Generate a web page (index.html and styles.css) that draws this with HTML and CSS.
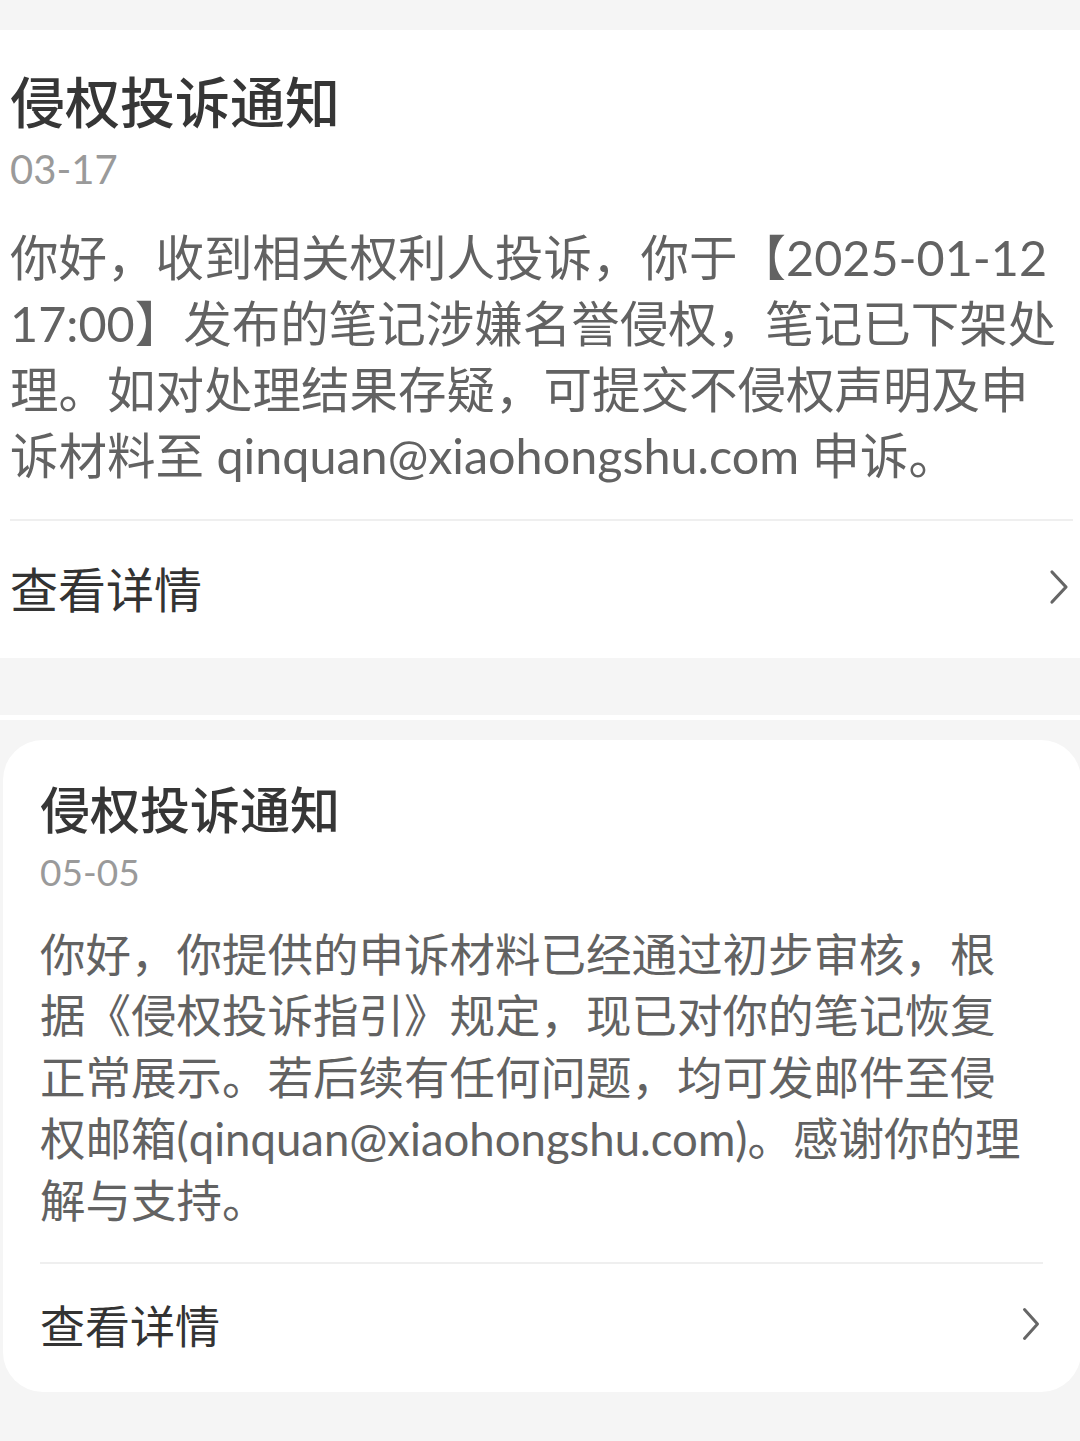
FILE: index.html
```html
<!DOCTYPE html>
<html lang="zh-CN">
<head>
<meta charset="utf-8">
<title>侵权投诉通知</title>
<link rel="stylesheet" href="styles.css">
</head>
<body>
<main class="page">
  <section class="card card-flat">
    <h2 class="title">侵权投诉通知</h2>
    <div class="date">03-17</div>
    <p class="text">你好，收到相关权利人投诉，你于【2025-01-12<br>17:00】发布的笔记涉嫌名誉侵权，笔记已下架处<br>理。如对处理结果存疑，可提交不侵权声明及申<br>诉材料至 qinquan@xiaohongshu.com 申诉。</p>
    <div class="divider"></div>
    <div class="footer">
      <span class="more">查看详情</span>
      <svg class="chev" width="22" height="38" viewBox="0 0 22 38"><path d="M4 4 L18 19 L4 34" fill="none" stroke="#666" stroke-width="3.2" stroke-linecap="round" stroke-linejoin="round"/></svg>
    </div>
  </section>

  <div class="sep"></div>

  <section class="card card-round">
    <h2 class="title">侵权投诉通知</h2>
    <div class="date">05-05</div>
    <p class="text">你好，你提供的申诉材料已经通过初步审核，根<br>据《侵权投诉指引》规定，现已对你的笔记恢复<br>正常展示。若后续有任何问题，均可发邮件至侵<br>权邮箱(qinquan@xiaohongshu.com)。感谢你的理<br>解与支持。</p>
    <div class="divider"></div>
    <div class="footer">
      <span class="more">查看详情</span>
      <svg class="chev" width="20" height="36" viewBox="0 0 20 36"><path d="M3.5 3.5 L16.5 18 L3.5 32.5" fill="none" stroke="#666" stroke-width="3" stroke-linecap="round" stroke-linejoin="round"/></svg>
    </div>
  </section>
</main>
</body>
</html>
```

FILE: styles.css
```css
html, body {
  margin: 0;
  padding: 0;
  overflow-x: hidden;
}
body {
  background: #f5f5f5;
  font-family: "Lato", "Noto Sans CJK SC", "Noto Sans", sans-serif;
  width: 1080px;
  height: 1441px;
}
.page {
  padding-top: 30px;
  display: flex;
  flex-direction: column;
}
.card {
  background: #fff;
  display: flex;
  flex-direction: column;
}
.title {
  margin: 0;
  font-family: "Noto Sans CJK SC", sans-serif;
  font-weight: 500;
  color: #363636;
}
.date {
  color: #9a9a9a;
}
.text {
  margin: 0;
  color: #626262;
  white-space: nowrap;
}
.divider {
  height: 2px;
  background: #efefef;
}
.footer {
  display: flex;
  align-items: center;
  justify-content: space-between;
}
.more {
  font-family: "Noto Sans CJK SC", sans-serif;
  color: #333;
}

/* first card: full width, square */
.card-flat {
  padding: 31px 7px 0 10px;
}
.card-flat .title {
  font-size: 55px;
  line-height: 76px;
}
.card-flat .date {
  font-size: 40px;
  line-height: 50px;
  margin-top: 7px;
}
.card-flat .text {
  font-size: 48.5px;
  line-height: 66px;
  margin-top: 30px;
}
.card-flat .divider {
  margin-top: 31px;
}
.card-flat .footer {
  height: 131px;
  padding: 0 3px 6px 0;
}
.card-flat .more {
  font-size: 48px;
}

.sep {
  height: 5px;
  background: #fff;
  margin-top: 57px;
  margin-bottom: 20px;
}

/* second card: rounded, slightly inset */
.card-round {
  margin-left: 3px;
  width: 1078px;
  box-sizing: border-box;
  border-radius: 40px;
  padding: 32px 38px 0 37px;
}
.card-round .title {
  font-size: 50px;
  line-height: 70px;
}
.card-round .date {
  font-size: 37px;
  line-height: 46px;
  margin-top: 7px;
}
.card-round .text {
  font-size: 45.5px;
  line-height: 61.4px;
  margin-top: 29px;
}
.card-round .divider {
  margin-top: 31px;
}
.card-round .footer {
  height: 120px;
  padding: 0 2px 8px 0;
}
.card-round .more {
  font-size: 45px;
}
```
